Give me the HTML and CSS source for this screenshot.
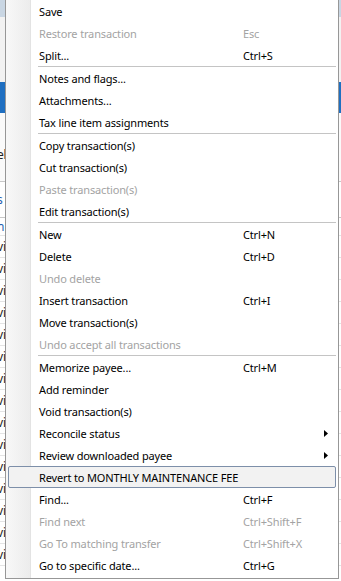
FILE: index.html
```html
<!DOCTYPE html>
<html lang="en">
<head>
    <meta charset="UTF-8">
    <meta name="viewport" content="width=device-width, initial-scale=1.0">
    <title>Register context menu</title>
    <link rel="stylesheet" href="styles.css">
</head>
<body>

<div class="app">
    <div class="app-title"></div>
    <div class="app-toolbar"></div>
    <div class="app-tabs"></div>
    <div class="app-pane">
        <div class="pane-head"><span>el</span></div>
        <div class="pane-filter"><span class="blue">s</span></div>
        <div class="pane-row short"><span class="blue">n</span></div>
        <div class="pane-row"><span>vi</span></div>
        <div class="pane-row"><span>vi</span></div>
        <div class="pane-row"><span>vi</span></div>
        <div class="pane-row"><span>vi</span></div>
        <div class="pane-row"><span>vi</span></div>
        <div class="pane-row"><span>vi</span></div>
        <div class="pane-row"><span>vi</span></div>
        <div class="pane-row"><span>vi</span></div>
        <div class="pane-row"><span>vi</span></div>
        <div class="pane-row"><span>vi</span></div>
        <div class="pane-row"><span>vi</span></div>
        <div class="pane-row"><span>vi</span></div>
        <div class="pane-row"><span>vi</span></div>
        <div class="pane-row"><span>vi</span></div>
        <div class="pane-row"><span>vi</span></div>
    </div>
</div>

<div class="menu">
    <div class="item"><span>Save</span></div>
    <div class="item disabled"><span>Restore transaction</span><span class="key">Esc</span></div>
    <div class="item"><span>Split...</span><span class="key">Ctrl+S</span></div>
    <div class="sep"></div>
    <div class="item"><span>Notes and flags...</span></div>
    <div class="item"><span>Attachments...</span></div>
    <div class="item"><span>Tax line item assignments</span></div>
    <div class="sep"></div>
    <div class="item"><span>Copy transaction(s)</span></div>
    <div class="item"><span>Cut transaction(s)</span></div>
    <div class="item disabled"><span>Paste transaction(s)</span></div>
    <div class="item"><span>Edit transaction(s)</span></div>
    <div class="sep"></div>
    <div class="item"><span>New</span><span class="key">Ctrl+N</span></div>
    <div class="item"><span>Delete</span><span class="key">Ctrl+D</span></div>
    <div class="item disabled"><span>Undo delete</span></div>
    <div class="item"><span>Insert transaction</span><span class="key">Ctrl+I</span></div>
    <div class="item"><span>Move transaction(s)</span></div>
    <div class="item disabled"><span>Undo accept all transactions</span></div>
    <div class="sep"></div>
    <div class="item"><span>Memorize payee...</span><span class="key">Ctrl+M</span></div>
    <div class="item"><span>Add reminder</span></div>
    <div class="item"><span>Void transaction(s)</span></div>
    <div class="item"><span>Reconcile status</span><span></span><svg class="arrow" width="4" height="7" viewBox="0 0 4 7"><polygon points="0,0 4,3.5 0,7" fill="#000"/></svg></div>
    <div class="item"><span>Review downloaded payee</span><span></span><svg class="arrow" width="4" height="7" viewBox="0 0 4 7"><polygon points="0,0 4,3.5 0,7" fill="#000"/></svg></div>
    <div class="item hover"><span>Revert to MONTHLY MAINTENANCE FEE</span></div>
    <div class="item"><span>Find...</span><span class="key">Ctrl+F</span></div>
    <div class="item disabled"><span>Find next</span><span class="key">Ctrl+Shift+F</span></div>
    <div class="item disabled"><span>Go To matching transfer</span><span class="key">Ctrl+Shift+X</span></div>
    <div class="item"><span>Go to specific date...</span><span class="key">Ctrl+G</span></div>
</div>

</body>
</html>
```

FILE: styles.css
```css
body {
    margin: 0;
    width: 341px;
    height: 581px;
    overflow: hidden;
    position: relative;
    font-family: "Noto Sans", "Open Sans", sans-serif;
    font-size: 11px;
    letter-spacing: -0.15px;
    background: #fff;
}
.app {
    display: flex;
    flex-direction: column;
    height: 100%;
}
.app-title {
    height: 17px;
    background: #c9d6e3;
}
.app-toolbar {
    height: 65px;
    background: #f2f2f2;
}
.app-tabs {
    height: 31px;
    background: #1f6fc1;
}
.app-pane {
    display: flex;
    flex-direction: column;
    color: #222;
    font-size: 12px;
}
.app-pane span {
    margin-left: -3px;
}
.app-pane .blue {
    color: #1f5fb0;
}
.pane-head {
    height: 69px;
    display: flex;
    align-items: center;
    padding-top: 14px;
    box-sizing: border-box;
    border-bottom: 1px solid #c8c8c8;
    background: #fafafa;
}
.pane-filter {
    height: 36px;
    display: flex;
    align-items: center;
    box-sizing: border-box;
    border-bottom: 1px solid #c8c8c8;
}
.pane-row {
    height: 22px;
    display: flex;
    align-items: center;
    box-sizing: border-box;
    border-bottom: 1px solid #e4e4e4;
}
.pane-row.short {
    height: 18px;
}

/* popup menu, sits over the register */
.menu {
    position: absolute;
    left: 5px;
    top: -3px;
    width: 334px;
    box-sizing: border-box;
    padding: 2px 0;
    border: 1px solid #979797;
    background: linear-gradient(to right, #f8f8f8 0, #ececec 24px, #e3e3e3 24px, #e3e3e3 25px, #fff 25px);
}
.item {
    display: grid;
    grid-template-columns: 204px 1fr 4px;
    align-items: center;
    height: 22px;
    line-height: 21px;
    box-sizing: border-box;
    margin: 0 2px;
    padding: 0 7px 0 30px;
    border: 1px solid transparent;
    border-radius: 2px;
    color: #000;
    white-space: nowrap;
}
.item.disabled {
    color: #a3a3a3;
}
.item.hover {
    background: #f2f2f2;
    border-color: #7d8fa9;
}
.arrow {
    display: block;
}
.sep {
    height: 1px;
    margin: 0 2px 0 32px;
    background: #c4c4c4;
}
```
